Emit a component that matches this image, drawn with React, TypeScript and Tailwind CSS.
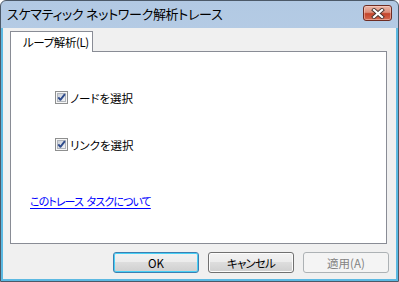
export default function App() {
  return (
    <div className="w-[399px] h-[282px] bg-white overflow-hidden font-['Noto_Sans_CJK_JP',sans-serif] [font-feature-settings:'palt'] text-black">
      <div className="w-[399px] h-[282px] flex flex-col border border-[#4c5968] rounded-t-[6px] overflow-hidden bg-[linear-gradient(to_bottom,#b2c9e3,#cadcf0)]">
        <div className="h-[27px] shrink-0 flex items-start justify-between pl-[6px] pr-[6px]">
          <span className="mt-[5px] text-[13px] leading-[16px] tracking-[-0.3px] whitespace-nowrap">スケマティック ネットワーク解析トレース</span>
          <div className="mt-[4px] w-[29px] h-[16px] rounded-[3px] border border-[#6e2c22] bg-[linear-gradient(to_bottom,#ecb6a8_0%,#dc8f7b_45%,#c4442b_55%,#d46a51_100%)] shadow-[inset_0_0_0_1px_rgba(255,220,210,0.45)] flex items-center justify-center">
            <svg width="14" height="11" viewBox="0 0 14 11">
              <path d="M3 2 L11 9 M11 2 L3 9" stroke="#4b3530" strokeWidth="4" strokeLinecap="square" fill="none" />
              <path d="M3 2 L11 9 M11 2 L3 9" stroke="#ffffff" strokeWidth="2.2" strokeLinecap="square" fill="none" />
            </svg>
          </div>
        </div>
        <div className="flex-1 flex flex-col border-x-2 border-b-2 border-[#5cb9e2] bg-[#f0f0f0] pt-[3px]">
          <div className="relative z-10 ml-[7px] mb-[-1px] w-[83px] h-[21px] border-t border-x border-[#898c95] bg-white flex items-center pl-[12px] text-[11.5px] leading-[14px] whitespace-nowrap tracking-[-0.4px]">
            ループ解析(L)
          </div>
          <div className="ml-[7px] mr-[9px] h-[193px] border border-[#898c95] bg-white flex flex-col text-[11.5px] leading-[14px]">
            <div className="mt-[39px] ml-[44px] h-[13px] flex items-center gap-[2px]">
              <CheckBox />
              <span className="whitespace-nowrap">ノードを選択</span>
            </div>
            <div className="mt-[34px] ml-[44px] h-[13px] flex items-center gap-[2px]">
              <CheckBox />
              <span className="whitespace-nowrap">リンクを選択</span>
            </div>
            <div className="mt-[43px] ml-[19px] h-[14px] flex">
              <span className="text-[#0000ff] underline underline-offset-[2px] text-[11px] tracking-[-0.9px] [word-spacing:2px] whitespace-pre">このトレース タスクについて</span>
            </div>
          </div>
          <div className="mt-[8px] h-[21px] flex justify-end gap-[9px] pr-[7px] text-[11.5px] leading-[14px] whitespace-nowrap">
            <div className="w-[86px] h-[21px] rounded-[3px] border border-[#3c7fb1] shadow-[inset_0_0_0_1px_#48d0f6] bg-[linear-gradient(to_bottom,#f2f2f2_0%,#ebebeb_50%,#dddddd_50%,#cfcfcf_100%)] flex items-center justify-center">
              OK
            </div>
            <div className="w-[86px] h-[21px] rounded-[3px] border border-[#707070] shadow-[inset_0_0_0_1px_#fcfcfc] bg-[linear-gradient(to_bottom,#f2f2f2_0%,#ebebeb_50%,#dddddd_50%,#cfcfcf_100%)] flex items-center justify-center tracking-[-0.8px]">
              キャンセル
            </div>
            <div className="w-[86px] h-[21px] rounded-[3px] border border-[#adb2b5] bg-[#f4f4f4] text-[#838383] flex items-center justify-center">
              適用(A)
            </div>
          </div>
        </div>
      </div>
    </div>
  );
}

function CheckBox() {
  return (
    <svg width="13" height="13" viewBox="0 0 13 13" className="shrink-0">
      <defs>
        <linearGradient id="cbg" x1="0" y1="0" x2="1" y2="1">
          <stop offset="0" stopColor="#c9ced6" />
          <stop offset="1" stopColor="#f4f5f7" />
        </linearGradient>
      </defs>
      <rect x="0.5" y="0.5" width="12" height="12" fill="#f6f6f6" stroke="#8e8f8f" />
      <rect x="2.5" y="2.5" width="8" height="8" fill="url(#cbg)" stroke="#b0b5bc" />
      <path d="M3.3 6.3 L5.4 8.8 L9.9 3.2" stroke="#2f4c8c" strokeWidth="1.9" fill="none" strokeLinejoin="round" />
    </svg>
  );
}
